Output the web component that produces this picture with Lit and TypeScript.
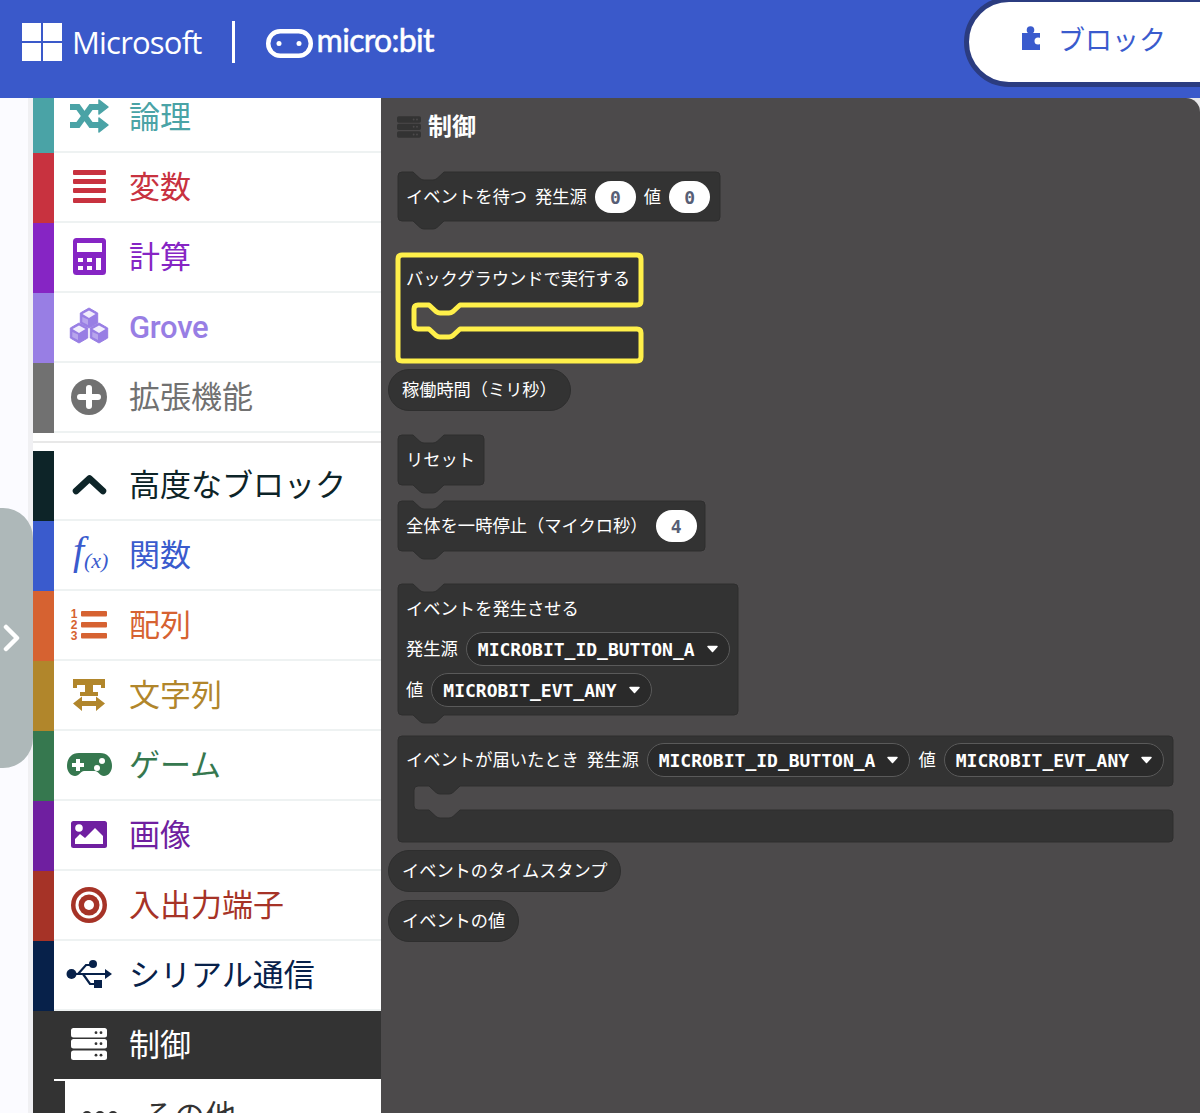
import { LitElement, html, svg, css } from "lit";
import { customElement } from "lit/decorators.js";

const tabLeft = "l-7 6.5q-2 1.5-4 1.5h-9q-2 0-4-1.5l-7-6.5";
const tabRight = "l7 6.5q2 1.5 4 1.5h9q2 0 4-1.5l7-6.5";

function stackPath(w: number, h: number) {
  return `M0 4q0-4 4-4H15${tabRight}H${w - 4}q4 0 4 4V${h - 4}q0 4-4 4H46${tabLeft}H4q-4 0-4-4Z`;
}

function mouthPath(w: number) {
  return `M0 4q0-4 4-4H${w - 4}q4 0 4 4V46q0 4-4 4H62${tabLeft}H20q-4 0-4 4V70q0 4 4 4H31${tabRight}H${w - 4}q4 0 4 4V102q0 4-4 4H4q-4 0-4-4Z`;
}

type Part = { t: string; k?: "field" | "drop" };
type Block = {
  x: number;
  y: number;
  w?: number;
  h?: number;
  kind: "stack" | "mouth" | "pill";
  pad?: string;
  hot?: boolean;
  rows: Part[][];
};

const blocks: Block[] = [
  { x: 397, y: 171, w: 323, h: 50, kind: "stack", rows: [[{ t: "イベントを待つ" }, { t: "発生源" }, { t: "0", k: "field" }, { t: "値" }, { t: "0", k: "field" }]] },
  { x: 397, y: 254, w: 244, kind: "mouth", hot: true, pad: "p9", rows: [[{ t: "バックグラウンドで実行する" }]] },
  { x: 388, y: 369, kind: "pill", rows: [[{ t: "稼働時間（ミリ秒）" }]] },
  { x: 397, y: 434, w: 87, h: 51, kind: "stack", rows: [[{ t: "リセット" }]] },
  { x: 397, y: 500, w: 308, h: 51, kind: "stack", rows: [[{ t: "全体を一時停止（マイクロ秒）" }, { t: "4", k: "field" }]] },
  { x: 397, y: 583, w: 341, h: 132, kind: "stack", pad: "p9", rows: [[{ t: "イベントを発生させる" }], [{ t: "発生源" }, { t: "MICROBIT_ID_BUTTON_A", k: "drop" }], [{ t: "値" }, { t: "MICROBIT_EVT_ANY", k: "drop" }]] },
  { x: 397, y: 735, w: 776, kind: "mouth", pad: "p8", rows: [[{ t: "イベントが届いたとき" }, { t: "発生源" }, { t: "MICROBIT_ID_BUTTON_A", k: "drop" }, { t: "値" }, { t: "MICROBIT_EVT_ANY", k: "drop" }]] },
  { x: 388, y: 850, kind: "pill", rows: [[{ t: "イベントのタイムスタンプ" }]] },
  { x: 388, y: 900, kind: "pill", rows: [[{ t: "イベントの値" }]] },
];

function serverIcon(fill: string, dot: string, cls = "ico") {
  const rows = [7, 18, 29.5];
  return html`<svg class=${cls} viewBox=${cls === "ico" ? "0 0 48 48" : "6 7 36 32"}>
    ${rows.map(
      (y) => svg`<rect x="6" y=${y} width="36" height="9.5" rx="2.5" fill=${fill}></rect>
        <circle cx="31" cy=${y + 4.7} r="1.4" fill=${dot}></circle>
        <circle cx="36" cy=${y + 4.7} r="1.4" fill=${dot}></circle>`
    )}
  </svg>`;
}

function cube(cx: number, cy: number, c: string) {
  const r = 10;
  const dx = r * 0.87;
  return svg`<polygon points="${cx},${cy - r} ${cx + dx},${cy - r / 2} ${cx + dx},${cy + r / 2} ${cx},${cy + r} ${cx - dx},${cy + r / 2} ${cx - dx},${cy - r / 2}" fill=${c} stroke=${c} stroke-width="1" stroke-linejoin="round"></polygon>
    <polygon points="${cx},${cy - r + 2.6} ${cx + dx - 2.2},${cy - r / 2 + 1} ${cx},${cy} ${cx - dx + 2.2},${cy - r / 2 + 1}" fill="#f1edfc"></polygon>
    <polygon points="${cx - dx + 2},${cy - r / 2 + 4} ${cx - 1},${cy + 1.5} ${cx - 1},${cy + r - 3} ${cx - dx + 2},${cy + r / 2 - 1}" fill="#f1edfc" opacity="0.35"></polygon>`;
}

const icons: Record<string, (c: string) => unknown> = {
  shuffle: (c) => html`<svg class="ico" viewBox="0 0 48 48">
    <path d="M5 14H13L26 32H35M5 32H13L26 14H35" fill="none" stroke=${c} stroke-width="6"></path>
    <path d="M34 7L43 14L34 21ZM34 25L43 32L34 39Z" fill=${c} stroke=${c} stroke-width="1.5" stroke-linejoin="round"></path>
  </svg>`,
  bars: (c) => html`<svg class="ico" viewBox="0 0 48 48">
    ${[7, 16, 25, 35].map((y) => svg`<rect x="8" y=${y} width="33" height="5" rx="1" fill=${c}></rect>`)}
  </svg>`,
  calc: (c) => html`<svg class="ico" viewBox="0 0 48 48">
    <rect x="8" y="5" width="33" height="37" rx="3.5" fill=${c}></rect>
    <rect x="12" y="10" width="25" height="9" fill="#fff"></rect>
    <rect x="13" y="25" width="5" height="4" fill="#fff"></rect>
    <rect x="22" y="25" width="5" height="4" fill="#fff"></rect>
    <rect x="13" y="33" width="5" height="4" fill="#fff"></rect>
    <rect x="22" y="33" width="5" height="4" fill="#fff"></rect>
    <rect x="31" y="25" width="5" height="12" fill="#fff"></rect>
  </svg>`,
  cubes: (c) => html`<svg class="ico" viewBox="0 0 48 48">
    ${cube(24, 15, c)} ${cube(14, 30, c)} ${cube(34, 30, c)}
  </svg>`,
  plus: (c) => html`<svg class="ico" viewBox="0 0 48 48">
    <circle cx="24" cy="24" r="18" fill=${c}></circle>
    <path d="M24 15V33M15 24H33" stroke="#fff" stroke-width="6" stroke-linecap="round"></path>
  </svg>`,
  up: (c) => html`<svg class="ico" viewBox="0 0 48 48">
    <path d="M11 30L24.5 17.5L38 30" fill="none" stroke=${c} stroke-width="6.5" stroke-linecap="round" stroke-linejoin="round"></path>
  </svg>`,
  fx: (c) => html`<svg class="ico" viewBox="0 0 48 48">
    <text x="8" y="33" class="fx-f" fill=${c}>f</text>
    <text x="19" y="37" class="fx-x" fill=${c}>(x)</text>
  </svg>`,
  list: (c) => html`<svg class="ico" viewBox="0 0 48 48">
    <text x="9" y="17" class="num" fill=${c}>1</text>
    <text x="9" y="28" class="num" fill=${c}>2</text>
    <text x="9" y="39" class="num" fill=${c}>3</text>
    <rect x="16" y="10" width="26" height="5.5" rx="1" fill=${c}></rect>
    <rect x="16" y="21" width="26" height="5.5" rx="1" fill=${c}></rect>
    <rect x="16" y="32" width="26" height="5.5" rx="1" fill=${c}></rect>
  </svg>`,
  width: (c) => html`<svg class="ico" viewBox="0 0 48 48">
    <path d="M8 8H40V17H36V14H28V21H33V25H15V21H20V14H12V17H8Z" fill=${c}></path>
    <path d="M8 32.5L17 25.5V30H31V25.5L40 32.5L31 40V35H17V40Z" fill=${c}></path>
  </svg>`,
  game: (c) => html`<svg class="ico" viewBox="0 0 48 48">
    <path d="M14 12H35C43 12 47 18 47 25C47 31 43 35 39 35C35 35 33 30 30 30H19C16 30 14 35 10 35C6 35 2 31 2 25C2 18 6 12 14 12Z" fill=${c}></path>
    <path d="M13 18V30M7 24H19" stroke="#fff" stroke-width="4"></path>
    <circle cx="37" cy="20" r="3" fill="#fff"></circle>
    <circle cx="32" cy="27" r="3" fill="#fff"></circle>
  </svg>`,
  image: (c) => html`<svg class="ico" viewBox="0 0 48 48">
    <rect x="6" y="10" width="36" height="27" rx="2.5" fill=${c}></rect>
    <circle cx="14" cy="17" r="3.8" fill="#fff"></circle>
    <path d="M10 33V28L15 23L20 27L30 17L38 25V33Z" fill="#fff"></path>
  </svg>`,
  target: (c) => html`<svg class="ico" viewBox="0 0 48 48">
    <circle cx="24" cy="24" r="18" fill=${c}></circle>
    <circle cx="24" cy="24" r="13.5" fill="#fff"></circle>
    <circle cx="24" cy="24" r="10.5" fill=${c}></circle>
    <circle cx="24" cy="24" r="5" fill="#fff"></circle>
  </svg>`,
  usb: (c) => html`<svg class="ico" viewBox="0 0 48 48">
    <circle cx="6.5" cy="23" r="5" fill=${c}></circle>
    <path d="M6 23H42M13 23L21 14H26M18 23L25 33H31" fill="none" stroke=${c} stroke-width="2.2"></path>
    <path d="M40 18L47 23L40 28Z" fill=${c}></path>
    <circle cx="28" cy="13" r="4" fill=${c}></circle>
    <rect x="29" y="29" width="8" height="8" fill=${c}></rect>
  </svg>`,
  dots: (c) => html`<svg class="ico" viewBox="0 0 48 48">
    <circle cx="11" cy="24" r="5" fill=${c}></circle>
    <circle cx="24" cy="24" r="5" fill=${c}></circle>
    <circle cx="37" cy="24" r="5" fill=${c}></circle>
  </svg>`,
};

const topCats = [
  { label: "論理", color: "#4aa3a6", icon: "shuffle" },
  { label: "変数", color: "#c8323f", icon: "bars" },
  { label: "計算", color: "#8625c4", icon: "calc" },
  { label: "Grove", color: "#987ee4", icon: "cubes", latin: true },
  { label: "拡張機能", color: "#717171", icon: "plus" },
];
const advCats = [
  { label: "高度なブロック", color: "#0d2428", icon: "up" },
  { label: "関数", color: "#3a5bcd", icon: "fx" },
  { label: "配列", color: "#d66231", icon: "list" },
  { label: "文字列", color: "#b1862b", icon: "width" },
  { label: "ゲーム", color: "#36784f", icon: "game" },
  { label: "画像", color: "#6f1fa0", icon: "image" },
  { label: "入出力端子", color: "#a63327", icon: "target" },
  { label: "シリアル通信", color: "#07214a", icon: "usb" },
];

@customElement("app-root")
export class AppRoot extends LitElement {
  static styles = css`
    :host {
      display: block;
      width: 1200px;
      height: 1113px;
      overflow: hidden;
      position: relative;
      font-family: "Noto Sans", "Noto Sans CJK JP", sans-serif;
      background: #fbfbff;
    }
    .header {
      height: 98px;
      background: #3a59ca;
      display: flex;
      align-items: flex-start;
      color: #fff;
    }
    .ms-logo {
      width: 40px;
      height: 38px;
      margin: 23px 0 0 22px;
      display: grid;
      grid-template-columns: 1fr 1fr;
      gap: 2px;
    }
    .ms-logo span {
      background: #fff;
    }
    .ms-name {
      font-family: "Open Sans", sans-serif;
      font-weight: 500;
      font-size: 31px;
      line-height: 42px;
      margin: 21px 0 0 10px;
      letter-spacing: -0.8px;
    }
    .divider {
      width: 3px;
      height: 42px;
      background: #fff;
      margin: 21px 0 0 30px;
    }
    .face {
      width: 47px;
      height: 29px;
      margin: 29px 0 0 31px;
    }
    .mb-name {
      font-family: "Lato", sans-serif;
      font-size: 32px;
      line-height: 40px;
      margin: 20px 0 0 4px;
      letter-spacing: -0.7px;
      -webkit-text-stroke: 0.5px #fff;
    }
    .tab {
      box-sizing: border-box;
      width: 290px;
      height: 90px;
      margin: -3px -54px 0 auto;
      border: 5px solid #2b3c80;
      border-radius: 45px;
      background: #fff;
      display: flex;
      align-items: center;
      padding: 0 0 8px 52px;
      gap: 17px;
      color: #3a5bcd;
      font-family: "Noto Sans CJK JP", sans-serif;
      font-size: 27px;
    }
    .puzzle {
      width: 20px;
      height: 26px;
      flex: none;
    }
    .main {
      display: flex;
      height: 1015px;
      background: #e8e8ea;
    }
    .gutter {
      box-sizing: border-box;
      width: 33px;
      flex: none;
      background: #fbfbff;
      border-right: 5px solid #f0f0f3;
    }
    .toolbox {
      width: 348px;
      flex: none;
      background: #fff;
      overflow: hidden;
    }
    .list {
      margin-top: -15px;
    }
    .cat {
      display: flex;
      height: 70px;
    }
    .bar {
      width: 21px;
      flex: none;
    }
    .cell {
      flex: 1;
      display: flex;
      align-items: center;
      gap: 16px;
      padding-left: 11px;
      border-bottom: 2px solid #eef2f2;
      font-size: 31px;
      font-family: "Roboto", "Noto Sans CJK JP", sans-serif;
    }
    .cell span {
      padding-bottom: 6px;
    }
    .cell span.latin {
      padding-bottom: 0;
      font-weight: 500;
      letter-spacing: -0.3px;
    }
    .ico {
      width: 48px;
      height: 48px;
      flex: none;
      overflow: visible;
    }
    .fx-f {
      font: italic 40px "Liberation Serif", serif;
    }
    .fx-x {
      font: italic 22px "Liberation Serif", serif;
    }
    .num {
      font: bold 12px "Liberation Sans", sans-serif;
      text-anchor: middle;
    }
    .sep {
      height: 18px;
      box-sizing: border-box;
      padding-top: 8px;
    }
    .sep div {
      height: 2px;
      background: #e8e8e8;
    }
    .active {
      display: flex;
      height: 68px;
      background: #333;
      color: #fff;
    }
    .active .cell {
      border-bottom: 0;
    }
    .sub {
      display: flex;
      height: 70px;
      background: #333;
    }
    .sub .bar {
      width: 32px;
    }
    .sub .cell {
      border: 0;
      background: #fff;
      color: #333;
      padding-left: 11px;
      gap: 19px;
    }
    .sub-top {
      background: #333;
      padding-left: 21px;
    }
    .sub-top div {
      height: 2px;
      background: #fff;
    }
    .flyout {
      flex: 1;
      position: relative;
      background: #4c4a4b;
      border-top-right-radius: 14px;
    }
    .title {
      display: flex;
      align-items: center;
      gap: 7px;
      padding: 10px 0 0 16px;
      color: #fff;
      font-family: "Noto Sans CJK JP", sans-serif;
      font-weight: 700;
      font-size: 24px;
      line-height: 34px;
    }
    .title-ico {
      width: 24px;
      height: 22px;
      margin-top: 4px;
    }
    .block {
      position: absolute;
      box-sizing: border-box;
      display: flex;
      flex-direction: column;
      gap: 7px;
      padding: 10px 0 0 9px;
      color: #fff;
      font-family: "Noto Sans CJK JP", sans-serif;
      font-size: 17.3px;
      white-space: nowrap;
    }
    .block.p9 {
      padding-top: 9px;
    }
    .block.p8 {
      padding-top: 8px;
    }
    .shape {
      position: absolute;
      left: 0.5px;
      top: 0.5px;
      overflow: visible;
    }
    .shape path {
      fill: #333;
      stroke: #2e2e2e;
      stroke-width: 1;
      stroke-linejoin: round;
    }
    .shape.hot path {
      stroke: #fff04a;
      stroke-width: 5;
    }
    .row {
      position: relative;
      display: flex;
      align-items: center;
      gap: 8px;
      min-height: 32px;
    }
    .row.first-multi {
      min-height: 33px;
    }
    .lbl {
      padding-bottom: 3px;
    }
    .field {
      box-sizing: border-box;
      width: 41px;
      height: 32px;
      border-radius: 16px;
      background: #fff;
      color: #575e75;
      display: flex;
      align-items: center;
      justify-content: center;
      font: 700 18px "DejaVu Sans Mono", monospace;
    }
    .drop {
      box-sizing: border-box;
      height: 34px;
      border-radius: 17px;
      border: 1px solid #5a5a5a;
      background: #2a2a2a;
      display: flex;
      align-items: center;
      gap: 11px;
      padding: 0 10px 0 11px;
      font: 700 18px "DejaVu Sans Mono", monospace;
    }
    .caret {
      width: 13px;
      height: 8px;
      flex: none;
    }
    .pill {
      position: absolute;
      box-sizing: border-box;
      height: 42px;
      display: flex;
      align-items: center;
      padding: 0 13px 3px;
      border-radius: 21px;
      background: #333;
      border: 1px solid #2e2e2e;
      color: #fff;
      font-family: "Noto Sans CJK JP", sans-serif;
      font-size: 17.2px;
      white-space: nowrap;
    }
    .handle {
      position: absolute;
      left: 0;
      top: 508px;
      width: 33px;
      height: 260px;
      background: #aeb8b9;
      border-radius: 0 30px 30px 0;
      display: flex;
      align-items: center;
      justify-content: center;
    }
    .handle svg {
      width: 18px;
      height: 28px;
      margin-right: 9px;
    }
  `;

  private renderCat(c: { label: string; color: string; icon: string; latin?: boolean }) {
    return html`<div class="cat">
      <div class="bar" style="background:${c.color}"></div>
      <div class="cell" style="color:${c.color}">
        ${icons[c.icon](c.color)}<span class=${c.latin ? "latin" : ""}>${c.label}</span>
      </div>
    </div>`;
  }

  private renderPart(p: Part) {
    if (p.k === "field") return html`<span class="field">${p.t}</span>`;
    if (p.k === "drop")
      return html`<span class="drop"
        >${p.t}<svg class="caret" viewBox="0 0 13 8"><path d="M2 1.5H11L6.5 6.5Z" fill="#fff" stroke="#fff" stroke-width="1.5" stroke-linejoin="round"></path></svg
      ></span>`;
    return html`<span class="lbl">${p.t}</span>`;
  }

  private renderBlock(b: Block) {
    const pos = `left:${b.x - 381}px;top:${b.y - 98}px`;
    if (b.kind === "pill") {
      return html`<div class="pill" style=${pos}>${b.rows[0][0].t}</div>`;
    }
    const h = b.kind === "mouth" ? 107 : b.h!;
    const d = b.kind === "mouth" ? mouthPath(b.w! - 1) : stackPath(b.w! - 1, h - 1);
    return html`<div class="block ${b.pad ?? ""}" style="${pos};width:${b.w}px;height:${h}px">
      <svg class="shape ${b.hot ? "hot" : ""}" width=${b.w!} height=${h}><path d=${d}></path></svg>
      ${b.rows.map(
        (r, i) => html`<div class="row ${b.rows.length > 1 && i === 0 ? "first-multi" : ""}">${r.map((p) => this.renderPart(p))}</div>`
      )}
    </div>`;
  }

  render() {
    return html`
      <div class="header">
        <div class="ms-logo"><span></span><span></span><span></span><span></span></div>
        <div class="ms-name">Microsoft</div>
        <div class="divider"></div>
        <svg class="face" viewBox="0 0 47 29">
          <rect x="2.25" y="2.25" width="42.5" height="24.5" rx="12" fill="none" stroke="#fff" stroke-width="4.5"></rect>
          <circle cx="13" cy="14.5" r="2.5" fill="#fff"></circle>
          <circle cx="33" cy="14.5" r="2.5" fill="#fff"></circle>
        </svg>
        <div class="mb-name">micro:bit</div>
        <div class="tab">
          <svg class="puzzle" viewBox="0 0 20 26">
            <circle cx="9.5" cy="5" r="3.8" fill="#3a5bcd"></circle>
            <rect x="1" y="8" width="18" height="17" fill="#3a5bcd"></rect>
            <circle cx="17" cy="16" r="3.5" fill="#fff"></circle>
          </svg>
          <span>ブロック</span>
        </div>
      </div>
      <div class="main">
        <div class="gutter"></div>
        <div class="toolbox">
          <div class="list">
            ${topCats.map((c) => this.renderCat(c))}
            <div class="sep"><div></div></div>
            ${advCats.map((c) => this.renderCat(c))}
            <div class="active">
              <div class="bar"></div>
              <div class="cell">${serverIcon("#fff", "#333")}<span>制御</span></div>
            </div>
            <div class="sub-top"><div></div></div>
            <div class="sub">
              <div class="bar"></div>
              <div class="cell">${icons.dots("#333")}<span>その他</span></div>
            </div>
          </div>
        </div>
        <div class="flyout">
          <div class="title">${serverIcon("#333", "#4c4a4b", "title-ico")}<span>制御</span></div>
          ${blocks.map((b) => this.renderBlock(b))}
        </div>
      </div>
      <div class="handle">
        <svg viewBox="0 0 18 28"><path d="M3 3L14 14L3 25" fill="none" stroke="#fff" stroke-width="4.5" stroke-linecap="round" stroke-linejoin="round"></path></svg>
      </div>
    `;
  }
}
